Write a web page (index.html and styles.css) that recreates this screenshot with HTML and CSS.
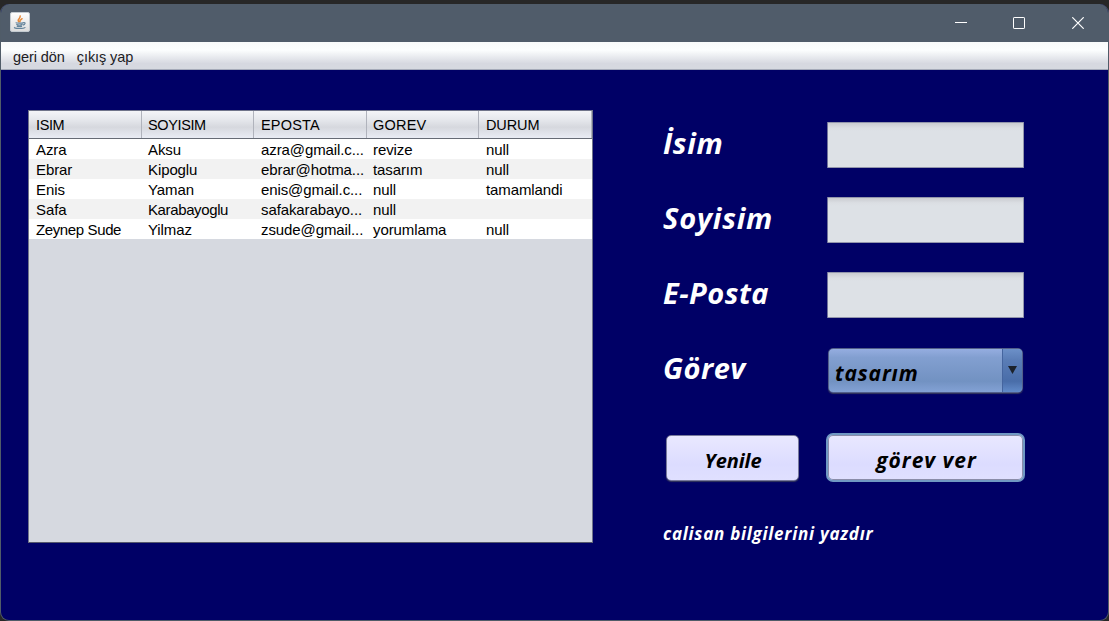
FILE: index.html
```html
<!DOCTYPE html>
<html lang="tr">
<head>
<meta charset="utf-8">
<title>Görev</title>
<link rel="stylesheet" href="styles.css">
</head>
<body>
<div class="window">
  <header class="titlebar">
    <svg class="app-icon" width="20" height="20" viewBox="0 0 20 20">
      <defs><linearGradient id="tile" x1="0" y1="0" x2="0" y2="1"><stop offset="0" stop-color="#fff"/><stop offset="1" stop-color="#dcdcdc"/></linearGradient></defs>
      <rect x=".5" y=".5" width="19" height="19" rx="1.5" fill="url(#tile)" stroke="#c3cad0"/>
      <path d="M9.3 10.2C5.8 7.3 11.6 6.6 10 3.4M10.4 10.2C8.6 8.2 12 7.8 12.2 6.2" fill="none" stroke="#e58a3c" stroke-width="1.5"/>
      <path d="M5.6 10.6c1 .8 6.5.8 8 0M6.3 12.4c1.6.7 4.6.7 6.2 0M6.8 14.1c1.6.6 3.8.6 5.2 0M13.4 10.6c2.6-.6 2 2-.6 2.6M4.6 15.2c-1.5 1.6 8.8 1.8 10.8.2" fill="none" stroke="#64849b" stroke-width="1.2"/>
    </svg>
    <div class="controls">
      <svg width="12" height="12" viewBox="0 0 12 12"><path d="M0 5.5h12" stroke="#fff"/></svg>
      <svg width="12" height="12" viewBox="0 0 12 12"><rect x=".5" y=".5" width="11" height="11" rx=".6" fill="none" stroke="#fff"/></svg>
      <svg width="12" height="12" viewBox="0 0 12 12"><path d="M.3.3l11.4 11.4M11.7.3L.3 11.7" stroke="#fff" stroke-width="1.2"/></svg>
    </div>
  </header>
  <nav class="menubar"><span>geri dön</span><span>çıkış yap</span></nav>
  <main class="content">
    <section class="table-pane">
      <div class="row head"><span class="narrow">ISIM</span><span class="narrow">SOYISIM</span><span class="wide">EPOSTA</span><span class="wide">GOREV</span><span>DURUM</span></div>
      <div class="row"><span>Azra</span><span>Aksu</span><span>azra@gmail.c...</span><span>revize</span><span>null</span></div>
      <div class="row"><span>Ebrar</span><span>Kipoglu</span><span>ebrar@hotma...</span><span>tasarım</span><span>null</span></div>
      <div class="row"><span>Enis</span><span>Yaman</span><span>enis@gmail.c...</span><span>null</span><span>tamamlandi</span></div>
      <div class="row"><span>Safa</span><span class="narrow">Karabayoglu</span><span>safakarabayo...</span><span>null</span><span></span></div>
      <div class="row"><span class="narrow">Zeynep Sude</span><span>Yilmaz</span><span>zsude@gmail...</span><span>yorumlama</span><span>null</span></div>
    </section>
    <section class="form">
      <label class="isim">İsim</label><div class="field"></div>
      <label class="soyisim">Soyisim</label><div class="field"></div>
      <label class="eposta">E-Posta</label><div class="field"></div>
      <label class="gorev">Görev</label>
      <div class="combo"><span class="value">tasarım</span><span class="arrow"><svg width="9" height="8" viewBox="0 0 9 8"><path d="M0 0h9L4.5 8z" fill="#1c222b"/></svg></span></div>
      <div class="button refresh"><span>Yenile</span></div>
      <div class="button assign"><span>görev ver</span></div>
      <p class="note"><span>calisan bilgilerini yazdır</span></p>
    </section>
  </main>
</div>
</body>
</html>
```

FILE: styles.css
```css
* { box-sizing: border-box; }
body {
  margin: 0;
  height: 621px;
  padding-top: 4px;
  overflow: hidden;
  background: #272727;
  font-family: "Liberation Sans", Arial, sans-serif;
}
.window {
  height: 617px;
  border: 1px solid #505c68;
  border-top: 0;
  border-radius: 9px;
  overflow: hidden;
  background: #000066;
}
.titlebar {
  height: 38px;
  display: flex;
  justify-content: space-between;
  align-items: center;
  padding: 0 24px 0 9px;
  background: #505c6a;
}
.app-icon { margin-bottom: 2px; }
.controls { display: flex; gap: 46px; }
.controls svg { display: block; }
.controls svg:last-child { margin-left: 1px; }
.menubar {
  height: 28px;
  display: flex;
  gap: 12px;
  padding: 0 12px;
  line-height: 30px;
  font-size: 14.5px;
  letter-spacing: -0.08px;
  color: #202024;
  background: linear-gradient(#f8fafa, #fcfefe 30%, #d6d8e0 80%, #d6d9e0);
  border-bottom: 1px solid #a4a9b8;
}
.content {
  display: flex;
  align-items: flex-start;
  gap: 70px;
  padding: 40px 0 0 27px;
}
.table-pane {
  width: 565px;
  height: 433px;
  border: 1px solid #70748a;
  border-bottom-color: #55586c;
  background: #d6d9e0;
  font-size: 15px;
  letter-spacing: -0.1px;
  color: #000;
}
.row {
  display: grid;
  grid-template-columns: repeat(5, 112.5px);
  height: 20px;
  line-height: 21px;
  background: #fff;
  white-space: nowrap;
  overflow: hidden;
}
.row:nth-child(odd) { background: #f2f2f2; }
.row span { padding-left: 7px; }
.row span:nth-child(2), .row span:nth-child(4) { padding-left: 6.5px; }
.row .narrow { letter-spacing: -0.38px; }
.row.head {
  height: 28px;
  line-height: 28px;
  font-size: 14.5px;
  letter-spacing: -0.1px;
  background: linear-gradient(#f4f5f8, #e4e6eb 35%, #d6d8de 60%, #e9ecf4);
  border-bottom: 1px solid #666b75;
}
.row.head .wide { letter-spacing: 0.2px; }
.row.head span { border-right: 1px solid #b0b3bc; }
.form {
  display: grid;
  grid-template-columns: 163px 199px;
  grid-template-rows: 48px 48px 48px 48px 50px 40px;
  row-gap: 27px;
  margin-top: 11px;
  font-family: "Open Sans", "Noto Sans", sans-serif;
  font-weight: 700;
  font-style: italic;
}
.form label {
  color: #fff;
  font-size: 29px;
  line-height: 44px;
  white-space: nowrap;
}
.isim { letter-spacing: 0.6px; }
.soyisim { letter-spacing: 0.8px; }
.eposta, .gorev { letter-spacing: 0.5px; }
.field {
  width: 197px;
  height: 46px;
  margin: 1px;
  border: 1px solid #9396ac;
  border-left-color: #70739a;
  border-radius: 1px;
  background: linear-gradient(#caccd1, #dbdee3 5px, #dde1e6 8px);
}
.combo {
  display: flex;
  width: 195px;
  height: 45px;
  margin: 2px 2px 0;
  border: 1px solid #525f8a;
  border-radius: 5px;
  overflow: hidden;
  background: linear-gradient(#95ade0, #829fd0 20%, #7292c2 75%, #83a2d5);
  box-shadow: 0 1px 1px #34375c;
  font-size: 21px;
  letter-spacing: 0.85px;
  line-height: 48px;
}
.value { flex: 1; padding-left: 6px; }
.arrow {
  width: 20px;
  border-left: 1px solid #45659f;
  background: linear-gradient(#6c90c8, #5a7db6 25%, #496da9 75%, #628bc9);
}
.arrow svg { display: block; margin: 17px 0 0 5px; }
.button {
  border: 1px solid #787a9c;
  border-radius: 5px;
  background: linear-gradient(#e9e8ff, #dcdcff 65%, #e0e0ff);
  color: #000;
  text-align: center;
  font-size: 20px;
}
.refresh {
  width: 133px;
  height: 46px;
  margin: 14px 0 0 2.5px;
  padding-left: 2px;
  line-height: 49px;
  letter-spacing: -0.1px;
  box-shadow: 0 1px 1px #34375c;
}
.assign {
  width: 199px;
  height: 49px;
  margin: 12px 0 0;
  padding-left: 2px;
  line-height: 50px;
  font-size: 21px;
  letter-spacing: 1px;
  border: 2px solid #7098c3;
  border-radius: 7px;
  box-shadow: inset 0 0 0 1px #8b8da9;
}
.note {
  grid-column: 1 / -1;
  margin: 24px 0 0;
  color: #fff;
  font-size: 17px;
  letter-spacing: 0.74px;
  line-height: 24px;
}
```
